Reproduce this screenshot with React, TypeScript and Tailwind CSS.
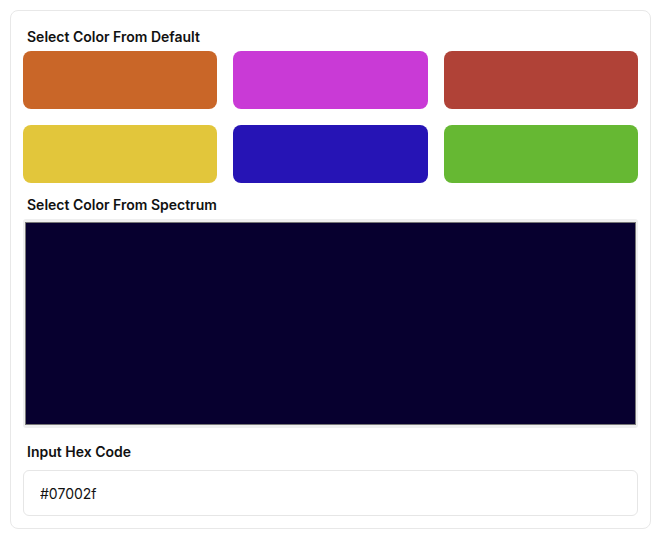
import { useState } from 'react'

const DEFAULTS = ['#c96628', '#c93ad6', '#b04237', '#e2c63b', '#2614b5', '#66b833']

export default function App() {
  const [color, setColor] = useState('#07002f')

  return (
    <div className="w-[661px] h-[543px] bg-white p-[10px] pb-[15px]" style={{ fontFamily: 'Inter, "Noto Sans", sans-serif' }}>
      <div className="border border-[#e8e8e8] rounded-lg px-3 pt-4 pb-3 flex flex-col">
        <p className="text-sm leading-5 font-semibold text-[#111] px-1">Select Color From Default</p>
        <div className="grid grid-cols-3 gap-4 mt-1">
          {DEFAULTS.map((c) => (
            <button
              key={c}
              type="button"
              onClick={() => setColor(c)}
              className="h-[58px] rounded-lg"
              style={{ backgroundColor: c }}
            />
          ))}
        </div>

        <p className="text-sm leading-5 font-semibold text-[#111] px-1 mt-3">Select Color From Spectrum</p>
        <div className="mt-1 h-[209px] bg-[#efefef] rounded-[3px] p-[2px] pt-[3px] pb-[3px]">
          <div className="h-full w-full border border-[#777]" style={{ backgroundColor: color }} />
        </div>

        <p className="text-sm leading-5 font-semibold text-[#111] px-1 mt-[14px]">Input Hex Code</p>
        <input
          value={color}
          onChange={(e) => setColor(e.target.value)}
          className="mt-2 h-[46px] border border-[#e6e6e6] rounded-md px-4 text-sm text-[#111] outline-none"
        />
      </div>
    </div>
  )
}
